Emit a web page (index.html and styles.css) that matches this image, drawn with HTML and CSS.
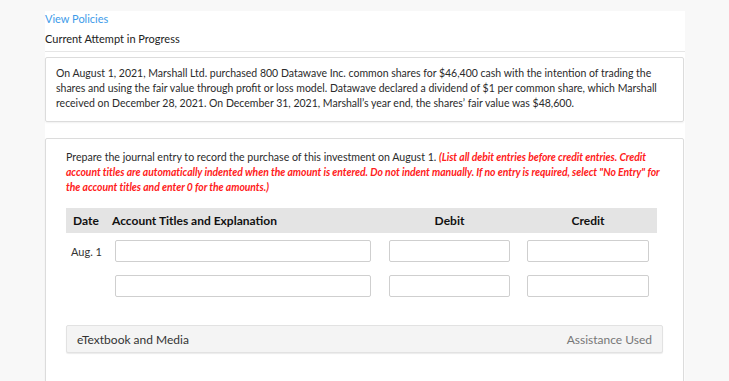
FILE: index.html
```html
<!DOCTYPE html>
<html lang="en">
  <head>
    <meta charset="UTF-8" />
    <title>Current Attempt in Progress</title>
    <link rel="stylesheet" href="styles.css">
  </head>
  <body>
    <main class="panel">
      <header class="top">
        <a class="policies" href="#">View Policies</a>
        <p class="attempt">Current Attempt in Progress</p>
      </header>

      <section class="box question">
        <p>On August 1, 2021, Marshall Ltd. purchased 800 Datawave Inc. common shares for $46,400 cash with the intention of trading the shares and using the fair value through profit or loss model. Datawave declared a dividend of $1 per common share, which Marshall received on December 28, 2021. On December 31, 2021, Marshall’s year end, the shares’ fair value was $48,600.</p>
      </section>

      <section class="box part">
        <p class="prompt">Prepare the journal entry to record the purchase of this investment on August 1. <em>(List all debit entries before credit entries. Credit account titles are automatically indented when the amount is entered. Do not indent manually. If no entry is required, select "No Entry" for the account titles and enter 0 for the amounts.)</em></p>

        <div class="journal">
          <div class="row head">
            <span class="date">Date</span>
            <span class="title">Account Titles and Explanation</span>
            <span class="amt">Debit</span>
            <span class="amt">Credit</span>
          </div>
          <div class="row">
            <span class="date">Aug. 1</span>
            <input class="title" type="text">
            <input class="amt" type="text">
            <input class="amt" type="text">
          </div>
          <div class="row">
            <span class="date"></span>
            <input class="title" type="text">
            <input class="amt" type="text">
            <input class="amt" type="text">
          </div>
        </div>

        <div class="media">
          <span>eTextbook and Media</span>
          <span class="used">Assistance Used</span>
        </div>
      </section>
    </main>
  </body>
</html>
```

FILE: styles.css
```css
body {
  margin: 0;
  background-color: #f8f8f8;
  font-family: "Lato", "Liberation Sans", sans-serif;
  color: #2b2b2b;
}
.panel {
  margin: 11px 0 0 45px;
  width: 640px;
  height: 370px;
  background-color: #fff;
}
.top {
  padding-top: 1px;
  border-bottom: 1px solid #e6e6e6;
  height: 39px;
}
.policies {
  display: block;
  color: #3d9be9;
  text-decoration: none;
  font-size: 11px;
  line-height: 13px;
}
.attempt {
  margin: 7px 0 0;
  font-size: 11px;
  line-height: 13px;
  color: #222;
}
.box {
  border: 1px solid #dcdcdc;
  border-radius: 2px;
  box-shadow: 0 1px 2px rgba(0, 0, 0, 0.06);
}
.question {
  margin-top: 5px;
  padding: 8px 10px 10px 10px;
  width: 617px;
}
.question p {
  margin: 0;
  font-size: 10.5px;
  line-height: 15px;
}
.part {
  margin-top: 16px;
  padding: 11px 12px 0 20px;
  width: 605px;
  height: 240px;
}
.prompt {
  margin: 0;
  font-size: 10.6px;
  line-height: 15px;
}
.prompt em {
  font-size: 10.4px;
  color: #ff2020;
  font-weight: bold;
  letter-spacing: -0.05px;
}
.journal {
  margin-top: 13px;
  width: 591px;
}
.row {
  display: flex;
  align-items: center;
  height: 22px;
  margin-bottom: 13px;
}
.row.head {
  height: 25px;
  margin-bottom: 7px;
  background-color: #e4e4e4;
  font-size: 12px;
  font-weight: bold;
  color: #111;
}
.date {
  width: 49px;
  padding-left: 5px;
  box-sizing: border-box;
  font-size: 11px;
  color: #333;
}
.head .date {
  width: 46px;
  padding-left: 7px;
  font-size: 12px;
  color: #111;
}
.title {
  width: 256px;
}
.head .title {
  width: 259px;
}
.amt {
  width: 121px;
  margin-left: 18px;
}
.head .amt {
  text-align: center;
}
.amt:last-child {
  margin-left: 17px;
  width: 122px;
}
input {
  box-sizing: border-box;
  height: 22px;
  border: 1px solid #cfcfcf;
  border-radius: 2px;
  background: #fff;
  padding: 0 4px;
  font-family: inherit;
}
.media {
  display: flex;
  justify-content: space-between;
  align-items: center;
  margin-top: 28px;
  height: 28px;
  width: 597px;
  padding: 0 10px;
  box-sizing: border-box;
  background-color: #f4f4f4;
  border: 1px solid #e2e2e2;
  border-radius: 2px;
  box-shadow: 0 1px 1px rgba(0, 0, 0, 0.08);
  font-size: 12px;
  color: #333;
}
.used {
  color: #777;
}
```
